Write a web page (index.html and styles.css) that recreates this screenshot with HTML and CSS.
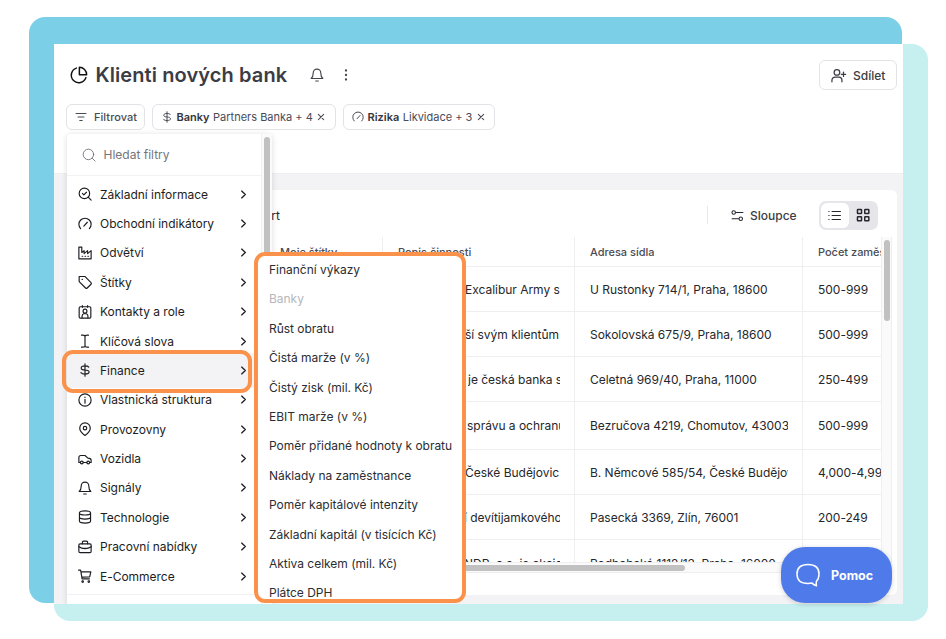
FILE: index.html
```html
<!DOCTYPE html>
<html lang="cs">
<head>
<meta charset="utf-8">
<title>Klienti nových bank</title>
<link rel="stylesheet" href="styles.css">
</head>
<body>
<svg class="sprite" aria-hidden="true">
  <symbol id="chev" viewBox="0 0 24 24"><path d="M8 4.500l8 7.500-8 7.500"/></symbol>
  <symbol id="dollar" viewBox="0 0 24 24"><path d="M12 1.500v21M18.500 7C17.500 5.500 15.500 5 12 5 8 5 5.500 6.200 5.500 8.500S8 12 12 12s7 1.200 7 3.600S16 19 12 19c-3.700 0-5.700-.6-7-2.500"/></symbol>
  <symbol id="gauge" viewBox="0 0 24 24"><path d="M4.500 20A10.500 10.500 0 1 1 19.500 20M10 15.500l6-6.500"/></symbol>
  <symbol id="bell" viewBox="0 0 24 24"><path d="M5.500 8.500a6.500 6.500 0 0 1 13 0c0 5.500 1 7.500 3.500 9.500H2c2.500-2 3.500-4 3.500-9.500zM9.800 22.300h4.400"/></symbol>
  <symbol id="x" viewBox="0 0 24 24"><path d="M4 4l16 16M20 4L4 20"/></symbol>
</svg>
<div class="stage">
  <div class="backdrop backdrop-blue"></div>
  <div class="backdrop backdrop-mint"></div>

  <main class="app">
    <header class="header">
      <div class="title-row">
        <svg class="icon pie" viewBox="0 0 24 24"><path d="M8.500 2.800a10 10 0 1 0 12.700 12.700"/><path d="M12.500 1.800v9.700h9.700a9.700 9.700 0 0 0-9.700-9.700z"/></svg>
        <h1>Klienti nových bank</h1>
        <svg class="icon title-bell"><use href="#bell"/></svg>
        <svg class="icon dots" viewBox="0 0 24 24"><circle cx="12" cy="3" r="2.300"/><circle cx="12" cy="12" r="2.300"/><circle cx="12" cy="21" r="2.300"/></svg>
        <button class="btn share"><svg class="icon" viewBox="0 0 24 24"><circle cx="9.500" cy="7" r="4.500"/><path d="M1.500 22v-2.500a5 5 0 0 1 5-5h6a5 5 0 0 1 5 5V22M16.500 10h7M20 6.500v7"/></svg><span>Sdílet</span></button>
      </div>
      <div class="chips">
        <button class="btn chip chip-filter"><svg class="icon" viewBox="0 0 24 24"><path d="M2 5h20M6 12h12M9.500 19h5"/></svg><span>Filtrovat</span></button>
        <button class="btn chip chip-bank"><svg class="icon"><use href="#dollar"/></svg><b>Banky</b><span>Partners Banka + 4</span><svg class="icon close"><use href="#x"/></svg></button>
        <button class="btn chip chip-risk"><svg class="icon"><use href="#gauge"/></svg><b>Rizika</b><span>Likvidace + 3</span><svg class="icon close"><use href="#x"/></svg></button>
      </div>
    </header>

    <section class="card">
      <div class="toolbar">
        <span class="export">Export</span>
        <div class="tools">
          <i class="sep"></i>
          <svg class="icon" viewBox="0 0 24 24"><circle cx="5" cy="6.500" r="3.200"/><path d="M9 6.500h13M2 18h12"/><circle cx="18" cy="18" r="3.200"/></svg>
          <span class="cols-label">Sloupce</span>
          <div class="toggle">
            <span class="on"><svg class="icon" viewBox="0 0 24 24"><path d="M7.500 4.500H23M7.500 12H23M7.500 19.500H23M1.500 4.500h.5M1.500 12h.5M1.500 19.500h.5"/></svg></span>
            <span><svg class="icon grid-icon" viewBox="0 0 24 24"><rect x="2.500" y="2.500" width="7" height="7" rx="1"/><rect x="15" y="2.500" width="7" height="7" rx="1"/><rect x="2.500" y="15" width="7" height="7" rx="1"/><rect x="15" y="15" width="7" height="7" rx="1"/></svg></span>
          </div>
        </div>
      </div>
      <div class="table-wrap">
        <div class="table">
          <div class="row head"><div></div><div><p>Moje štítky</p></div><div><p>Popis činnosti</p></div><div><p>Adresa sídla</p></div><div><p>Počet zaměstnanců</p></div></div>
          <div class="row"><div></div><div></div><div class="desc"><p class="l0">Excalibur Army s</p></div><div><p>U Rustonky 714/1, Praha, 18600</p></div><div><p>500-999</p></div></div>
          <div class="row"><div></div><div></div><div class="desc"><p class="l0">ší svým klientům</p></div><div><p>Sokolovská 675/9, Praha, 18600</p></div><div><p>500-999</p></div></div>
          <div class="row"><div></div><div></div><div class="desc"><p class="l3">je česká banka s</p></div><div><p>Celetná 969/40, Praha, 11000</p></div><div><p>250-499</p></div></div>
          <div class="row tall"><div></div><div></div><div class="desc"><p class="l2">správu a ochranu</p></div><div><p>Bezručova 4219, Chomutov, 43003</p></div><div><p>500-999</p></div></div>
          <div class="row"><div></div><div></div><div class="desc"><p class="l0">České Budějovic</p></div><div><p>B. Němcové 585/54, České Budějovice</p></div><div><p>4,000-4,999</p></div></div>
          <div class="row"><div></div><div></div><div class="desc"><p class="lm">í devítijamkového</p></div><div><p>Pasecká 3369, Zlín, 76001</p></div><div><p>200-249</p></div></div>
          <div class="row last"><div></div><div></div><div class="desc"><p class="lm">NDR, a.s. je akciová</p></div><div><p>Podbabská 1112/13, Praha, 16000</p></div><div></div></div>
        </div>
        <div class="vtrack"><i></i></div>
        <div class="htrack"><i></i></div>
      </div>
    </section>

    <aside class="menu">
      <div class="menu-body">
        <div class="search"><svg class="icon" viewBox="0 0 24 24"><circle cx="11" cy="11" r="9"/><path d="M17.500 17.500l5 5"/></svg><span>Hledat filtry</span></div>
        <ul>
          <li><svg class="icon" viewBox="0 0 24 24"><circle cx="11" cy="11" r="9"/><path d="M17.500 17.500l5 5M7.500 11l2.500 2.500 4.500-4.500"/></svg><span>Základní informace</span><svg class="icon chev"><use href="#chev"/></svg></li>
          <li><svg class="icon"><use href="#gauge"/></svg><span>Obchodní indikátory</span><svg class="icon chev"><use href="#chev"/></svg></li>
          <li><svg class="icon" viewBox="0 0 24 24"><path d="M1.500 2v20h21V8l-6 5V8l-6 5V8l-4 3V2zM7 17.500h1M12 17.500h1M17 17.500h1"/></svg><span>Odvětví</span><svg class="icon chev"><use href="#chev"/></svg></li>
          <li><svg class="icon" viewBox="0 0 24 24"><path d="M2 2.500v8.800L13 22.300a2 2 0 0 0 2.800 0l6.500-6.500a2 2 0 0 0 0-2.800L11.800 2.500zM7 7.500h.5"/></svg><span>Štítky</span><svg class="icon chev"><use href="#chev"/></svg></li>
          <li><svg class="icon" viewBox="0 0 24 24"><rect x="2" y="3" width="20" height="19.500" rx="2"/><circle cx="12" cy="10.500" r="3.300"/><path d="M7 22v-3a4 4 0 0 1 3-4h4a4 4 0 0 1 3 4v3M7.500 1v3M16.500 1v3"/></svg><span>Kontakty a role</span><svg class="icon chev"><use href="#chev"/></svg></li>
          <li><svg class="icon" viewBox="0 0 24 24"><path d="M6 2h2.500c2 0 3.500.8 3.500 2.500C12 2.800 13.500 2 15.500 2H18M6 22.500h2.500c2 0 3.500-.8 3.500-2.500 0 1.700 1.500 2.500 3.500 2.500H18M12 4.500V20"/></svg><span>Klíčová slova</span><svg class="icon chev"><use href="#chev"/></svg></li>
          <li class="active"><svg class="icon"><use href="#dollar"/></svg><span>Finance</span><svg class="icon chev"><use href="#chev"/></svg></li>
          <li><svg class="icon" viewBox="0 0 24 24"><circle cx="12" cy="12" r="10.500"/><path d="M12 11v6.500M12 7v.5"/></svg><span>Vlastnická struktura</span><svg class="icon chev"><use href="#chev"/></svg></li>
          <li><svg class="icon" viewBox="0 0 24 24"><path d="M21 10.500C21 16.500 12 23 12 23S3 16.500 3 10.500a9 9 0 0 1 18 0z"/><circle cx="12" cy="10.500" r="3"/></svg><span>Provozovny</span><svg class="icon chev"><use href="#chev"/></svg></li>
          <li><svg class="icon" viewBox="0 0 24 24"><path d="M4 18H1.500V9.500C1.500 7 3 6 5 6h7l5 4.500c3.500.3 5.500 1.200 5.500 3.500v4H20M9 18h6"/><circle cx="6.500" cy="18" r="2.400"/><circle cx="17.500" cy="18" r="2.400"/></svg><span>Vozidla</span><svg class="icon chev"><use href="#chev"/></svg></li>
          <li><svg class="icon"><use href="#bell"/></svg><span>Signály</span><svg class="icon chev"><use href="#chev"/></svg></li>
          <li><svg class="icon" viewBox="0 0 24 24"><ellipse cx="12" cy="5" rx="9.500" ry="3.500"/><path d="M2.500 5v14c0 2 4.200 3.500 9.500 3.500s9.500-1.500 9.500-3.500V5M2.500 12c0 2 4.200 3.500 9.500 3.500s9.500-1.500 9.500-3.500"/></svg><span>Technologie</span><svg class="icon chev"><use href="#chev"/></svg></li>
          <li><svg class="icon" viewBox="0 0 24 24"><rect x="1.500" y="6.500" width="21" height="15" rx="2"/><path d="M7.500 6.500V4a2 2 0 0 1 2-2h5a2 2 0 0 1 2 2v2.500M1.500 11.500c6 4.300 15 4.300 21 0M12 14v.5"/></svg><span>Pracovní nabídky</span><svg class="icon chev"><use href="#chev"/></svg></li>
          <li><svg class="icon" viewBox="0 0 24 24"><path d="M1 2h3.500L7 17h12.500M5 5h17l-2 8.500-13.500.5"/><circle cx="8" cy="21.500" r="1.300"/><circle cx="18.500" cy="21.500" r="1.300"/></svg><span>E-Commerce</span><svg class="icon chev"><use href="#chev"/></svg></li>
        </ul>
      </div>
      <div class="menu-scroll"><i></i></div>
    </aside>
  </main>

  <div class="ring"></div>
  <ul class="submenu">
    <li>Finanční výkazy</li>
    <li class="off">Banky</li>
    <li>Růst obratu</li>
    <li>Čistá marže (v %)</li>
    <li>Čistý zisk (mil. Kč)</li>
    <li>EBIT marže (v %)</li>
    <li>Poměr přidané hodnoty k obratu</li>
    <li>Náklady na zaměstnance</li>
    <li>Poměr kapitálové intenzity</li>
    <li>Základní kapitál (v tisících Kč)</li>
    <li>Aktiva celkem (mil. Kč)</li>
    <li>Plátce DPH</li>
  </ul>
  <button class="help"><svg class="icon" viewBox="0 0 24 24"><path d="M12 1.500C4.500 1.500 1 4.500 1 11s3.500 9.500 11 9.500c1.500 0 2.800-.1 4-.4 1 1 2.500 2 4.500 2.600-.4-1.500-.4-3-.1-4.400C22.200 16.600 23 14.200 23 11c0-6.500-3.500-9.500-11-9.500z"/></svg><span>Pomoc</span></button>
</div>
</body>
</html>
```
FILE: styles.css
```css
* { box-sizing: border-box; }
body { margin: 0; background: #fff; font-family: Inter, "Liberation Sans", sans-serif; font-size: 12px; color: #25272c; }
ul { list-style: none; margin: 0; padding: 0; }
p, h1 { margin: 0; }
button { font: inherit; color: inherit; }
.sprite { position: absolute; width: 0; height: 0; }
.icon { width: 14px; height: 14px; flex: none; fill: none; stroke: currentColor; stroke-width: 2; stroke-linecap: round; stroke-linejoin: round; overflow: visible; }

.stage { position: relative; width: 946px; height: 639px; overflow: hidden; padding: 44px 0 0 54px; }
.backdrop { position: absolute; border-radius: 16px; }
.backdrop-blue { left: 29px; top: 17px; width: 873px; height: 586px; background: #7bd0e8; }
.backdrop-mint { left: 54px; top: 44px; width: 874px; height: 577px; background: #c6efef; }

.app { position: relative; width: 849px; height: 560px; background: #f3f3f5; overflow: hidden; }
.header { height: 130px; background: #fff; border-bottom: 1px solid #efeff1; padding: 16px 6px 0 12px; }
.title-row { display: flex; align-items: center; height: 30px; padding-left: 4px; }
.pie { width: 18px; height: 18px; color: #111; }
h1 { margin-left: 7.500px; font-size: 20px; letter-spacing: .1px; font-weight: 600; color: #3b3c44; white-space: nowrap; width: 192.500px; }
.title-bell { margin-left: 22px; width: 14px; height: 14px; color: #44464e; }
.dots { margin-left: 16px; width: 12px; height: 12px; fill: #44464e; stroke: none; }
.btn { display: flex; align-items: center; border: 1px solid #e3e3e7; background: #fff; border-radius: 6px; white-space: nowrap; padding: 0; }
.share { margin-left: auto; width: 78px; height: 30px; padding-left: 11px; gap: 7px; font-weight: 500; color: #3b3c44; }
.share .icon { width: 15px; height: 15px; }
.chips { display: flex; gap: 7px; margin-top: 14px; }
.chip { height: 26px; padding-left: 8px; gap: 3.500px; font-size: 11px; color: #4a4c54; }
.chip .icon { width: 12px; height: 12px; }
.chip b { font-weight: 600; color: #34363d; }
.chip .close { width: 8px; height: 8px; stroke-width: 3.200; margin-left: 1px; }
.chip-filter { width: 79px; gap: 7px; font-weight: 500; letter-spacing: .05px; }
.chip-bank { width: 184px; }
.chip-risk { width: 152px; }

.card { margin: 16px 6px 0 13px; height: 405px; background: #fff; border-radius: 6px; overflow: hidden; }
.toolbar { display: flex; align-items: center; height: 47px; padding: 3px 19px 0 0; justify-content: space-between; }
.export { width: 213px; text-align: right; }
.tools { display: flex; align-items: center; }
.sep { width: 1px; height: 18px; background: #e8e8eb; margin-right: 23px; }
.tools .icon { width: 13px; height: 13px; }
.cols-label { margin-left: 6px; width: 47px; margin-right: 22px; font-weight: 500; color: #3b3c44; }
.toggle { display: flex; width: 59px; height: 29px; padding: 2px; border-radius: 7px; background: #e6e6ea; }
.toggle span { flex: 1; display: flex; align-items: center; justify-content: center; border-radius: 6px; }
.toggle .on { background: #fff; }
.tools .grid-icon { width: 14px; height: 14px; stroke-width: 2.600; margin-left: 2px; }

.table-wrap { display: grid; grid-template-columns: 814px 11px; grid-template-rows: 325px 11px; }
.table { overflow: hidden; }
.row { display: grid; grid-template-columns: 198px 118px 192px 228px 78px; height: 45px; }
.row > div { display: flex; align-items: center; padding: 1px 14px 0 15px; border-bottom: 1px solid #efeff1; border-right: 1px solid #efeff1; overflow: hidden; }
.row > div:last-child { padding-right: 0; border-right: 0; }
.row p { flex: 1; min-width: 0; overflow: hidden; white-space: nowrap; line-height: 20px; letter-spacing: -.02px; }
.row.head { height: 30px; font-size: 11px; font-weight: 500; color: #4a4c54; }
.row.head > div { padding-top: 0; }
.row > div:first-child { border-right: 0; }
.row.tall { height: 48px; }
.row > .desc { padding-left: 82px; }
.desc .l2 { margin-left: 2px; }
.desc .l3 { margin-left: 3px; }
.desc .lm { margin-left: -1px; }
.row.last > div { padding-top: 3px; }
.vtrack { background: #fafafa; border: solid #efeff0; border-width: 0 1px; padding: 3px 2px; }
.vtrack i { display: block; width: 6px; height: 81px; border-radius: 3px; background: #c1c1c1; }
.htrack { grid-column: 1 / 3; background: #fafafa; border: solid #efeff0; border-width: 1px 0; padding: 2px 0 0 199px; }
.htrack i { display: block; width: 419px; height: 6px; border-radius: 3px; background: #c1c1c1; }

.menu { position: absolute; left: 13px; top: 90px; width: 205px; height: 470px; display: flex; background: #fff; border-radius: 4px 4px 0 0; box-shadow: 0 1px 6px rgba(0,0,0,.14); color: #1c1d22; }
.menu-body { width: 194px; }
.search { display: flex; align-items: center; height: 42px; padding-left: 15px; gap: 7.500px; border-bottom: 1px solid #f2f2f4; color: #74767d; }
.search .icon { stroke-width: 1.600; }
.menu ul { padding-top: 3.500px; height: 419px; border-bottom: 1px solid #f2f2f4; }
.menu li { display: flex; align-items: center; height: 29.380px; padding: 0 12px 0 11px; gap: 8px; white-space: nowrap; letter-spacing: -.02px; }
.menu .chev { margin-left: auto; width: 11px; height: 11px; stroke-width: 2.800; }
.menu .active { background: #f3f3f5; box-shadow: 0 -3px #f3f3f5, 0 3px #f3f3f5; }
.menu-scroll { width: 11px; background: #fafafa; border-left: 1px solid #f0f0f2; padding: 3px 2px; }
.menu-scroll i { display: block; width: 6px; height: 150px; border-radius: 3px; background: #c1c1c1; }

.ring { position: absolute; left: 62px; top: 350px; width: 190px; height: 43px; border: 4px solid #fb924b; border-radius: 11px; }
.submenu { position: absolute; left: 254px; top: 252px; width: 212px; height: 351px; padding: 0 0 0 11px; border: 4px solid #fb924b; border-radius: 11px; background: #fff; overflow: hidden; }
.submenu li { height: 29.400px; line-height: 27.500px; white-space: nowrap; color: #2b2d32; letter-spacing: -.02px; }
.submenu .off { color: #b6b7bc; }
.help { position: absolute; left: 781px; top: 547px; width: 111px; height: 56px; display: flex; align-items: center; gap: 11px; padding: 0 0 0 15px; border: 0; border-radius: 24px; background: #4f7bea; color: #fff; font-size: 12.500px; font-weight: 700; box-shadow: 0 1px 5px rgba(0,0,0,.18); }
.help .icon { width: 24px; height: 24px; stroke-width: 1.500; }
```
